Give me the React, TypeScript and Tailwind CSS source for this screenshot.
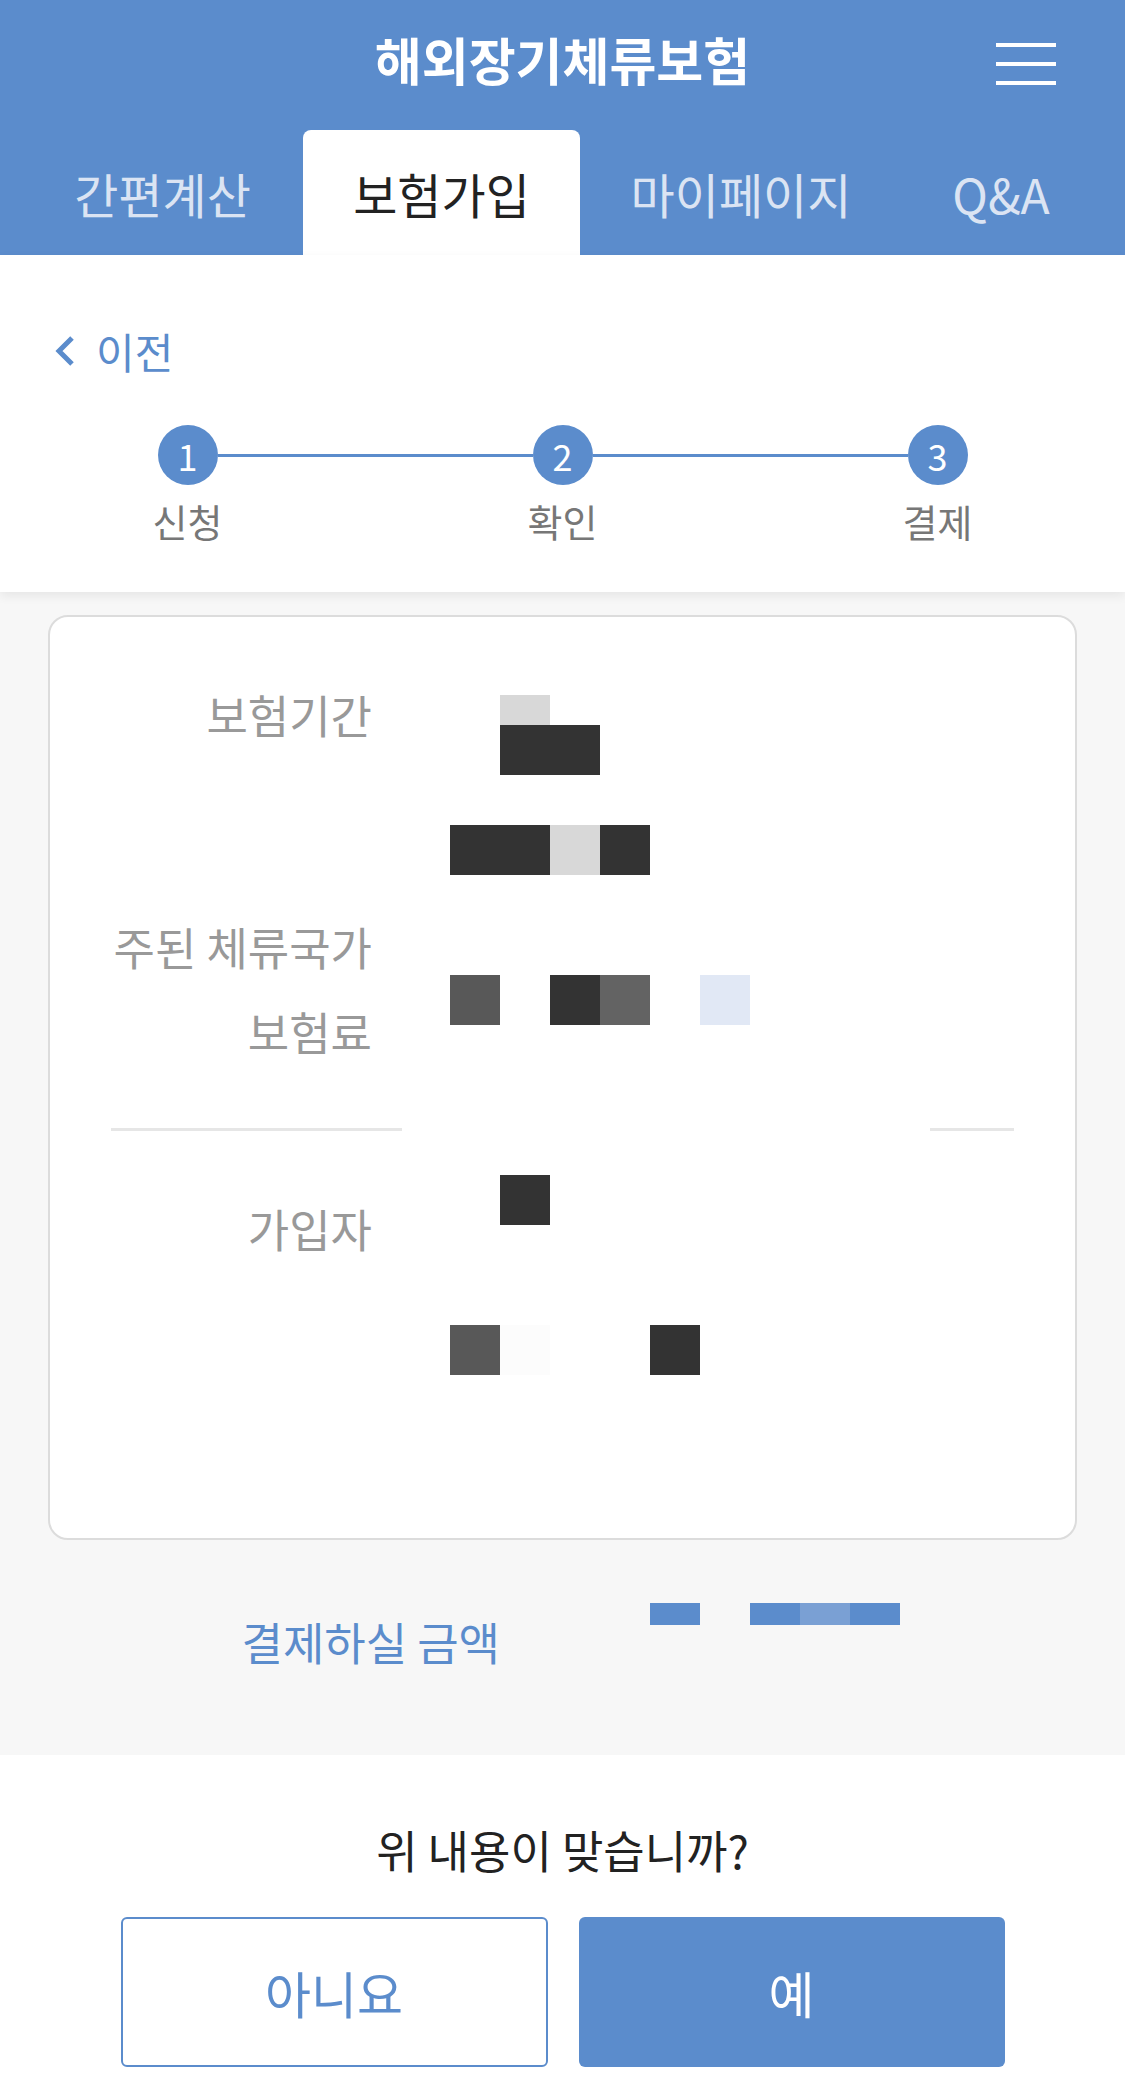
import React from 'react';

const Block = ({ w = 50, h = 50, c }: { w?: number; h?: number; c: string }) => (
    <div className={c} style={{ width: w, height: h }} />
);

const Step = ({ n, label, left, right }: { n: number; label: string; left: boolean; right: boolean }) => (
    <div className="flex w-[375px] flex-col items-center">
        <div className="flex w-full items-center">
            <div className={`h-[3px] flex-1 ${left ? 'bg-[#5b8ccc]' : ''}`} />
            <div className="flex h-[60px] w-[60px] items-center justify-center rounded-full bg-[#5b8ccc] text-[36px] leading-none text-white">
                {n}
            </div>
            <div className={`h-[3px] flex-1 ${right ? 'bg-[#5b8ccc]' : ''}`} />
        </div>
        <div className="mt-[19px] h-[34px] text-[38px] leading-[34px] text-[#777]">{label}</div>
    </div>
);

const App = () => {
    return (
        <div className="w-[1125px] font-['Noto_Sans_CJK_KR','Noto_Sans',sans-serif]">
            {/* header */}
            <div className="bg-[#5b8ccc]">
                <div className="relative flex h-[130px] items-start justify-center pt-[36px]">
                    <h1 className="text-[51px] font-bold leading-[46px] text-white">해외장기체류보험</h1>
                    <button className="absolute right-[69px] top-[43px] flex w-[60px] flex-col gap-[15px]">
                        <span className="block h-[4px] w-full bg-white" />
                        <span className="block h-[4px] w-full bg-white" />
                        <span className="block h-[4px] w-full bg-white" />
                    </button>
                </div>
                <div className="flex h-[125px] pl-[22px] text-[48px] leading-none">
                    <div className="flex w-[281px] items-center justify-center text-[#dbe4f3]">간편계산</div>
                    <div className="flex w-[277px] items-center justify-center rounded-t-[8px] bg-white text-[#222]">보험가입</div>
                    <div className="flex w-[322px] items-center justify-center text-[#dbe4f3]">마이페이지</div>
                    <div className="flex w-[198px] items-center justify-center text-[#dbe4f3]">Q&amp;A</div>
                </div>
            </div>

            {/* back + stepper */}
            <div className="relative z-10 bg-white pb-[54px] pt-[76px] shadow-[0_4px_10px_rgba(0,0,0,0.07)]">
                <div className="flex h-[40px] items-center pl-[54px] text-[42px] leading-[40px] text-[#5b8ccc]">
                    <svg width="22" height="32" viewBox="0 0 22 32" fill="none">
                        <path d="M18 3 L5 16 L18 29" stroke="#5b8ccc" strokeWidth="5" />
                    </svg>
                    <span className="ml-[20px]">이전</span>
                </div>
                <div className="mt-[54px] flex">
                    <Step n={1} label="신청" left={false} right />
                    <Step n={2} label="확인" left right />
                    <Step n={3} label="결제" left right={false} />
                </div>
            </div>

            {/* summary */}
            <div className="bg-[#f7f7f7] pb-[93px] pt-[23px]">
                <div className="mx-[48px] rounded-[20px] border-2 border-[#dcdcdc] bg-white pb-[163px] pt-[78px] text-[45px] leading-[40px] text-[#999]">
                    <div className="flex h-[80px]">
                        <div className="w-[322px] text-right">보험기간</div>
                        <div className="ml-[128px] flex flex-col">
                            <Block w={50} h={30} c="bg-[#d8d8d8]" />
                            <Block w={100} c="bg-[#333]" />
                        </div>
                    </div>
                    <div className="mt-[50px] flex h-[50px]">
                        <div className="w-[322px]" />
                        <div className="ml-[78px] flex">
                            <Block w={100} c="bg-[#333]" />
                            <Block c="bg-[#d8d8d8]" />
                            <Block c="bg-[#333]" />
                        </div>
                    </div>
                    <div className="mt-[52px] flex h-[40px]">
                        <div className="w-[322px] text-right">주된 체류국가</div>
                    </div>
                    <div className="mt-[8px] flex h-[77px]">
                        <div className="mt-[37px] w-[322px] text-right">보험료</div>
                        <div className="ml-[78px] flex h-[50px]">
                            <Block c="bg-[#585858]" />
                            <Block c="bg-white" />
                            <Block c="bg-[#333]" />
                            <Block c="bg-[#636363]" />
                            <Block c="bg-white" />
                            <Block c="bg-[#e1e8f5]" />
                        </div>
                    </div>
                    <div className="mt-[76px] flex h-[3px]">
                        <div className="ml-[61px] w-[291px] bg-[#e6e6e6]" />
                        <div className="ml-[528px] w-[84px] bg-[#e6e6e6]" />
                    </div>
                    <div className="mt-[44px] flex h-[74px]">
                        <div className="mt-[34px] w-[322px] text-right">가입자</div>
                        <div className="ml-[128px]">
                            <Block c="bg-[#333]" />
                        </div>
                    </div>
                    <div className="mt-[76px] flex h-[50px]">
                        <div className="w-[322px]" />
                        <div className="ml-[78px] flex">
                            <Block c="bg-[#585858]" />
                            <Block c="bg-[#fcfcfc]" />
                            <Block w={100} c="bg-white" />
                            <Block c="bg-[#333]" />
                        </div>
                    </div>
                </div>

                <div className="mt-[63px] flex h-[59px] text-[45px] leading-[40px] text-[#5b8ccc]">
                    <div className="mt-[19px] w-[500px] text-right">결제하실 금액</div>
                    <div className="ml-[150px] flex h-[22px]">
                        <Block h={22} c="bg-[#5b8ccc]" />
                        <Block h={22} c="bg-transparent" />
                        <Block h={22} c="bg-[#5b8ccc]" />
                        <Block h={22} c="bg-[#7aa0d4]" />
                        <Block h={22} c="bg-[#5b8ccc]" />
                    </div>
                </div>
            </div>

            {/* confirm */}
            <div className="bg-white pb-[8px] pt-[75px]">
                <p className="text-center text-[45px] leading-[40px] text-[#222]">위 내용이 맞습니까?</p>
                <div className="mt-[47px] flex justify-center gap-[31px]">
                    <button className="h-[150px] w-[427px] rounded-[6px] border-2 border-[#5b8ccc] bg-white text-[50px] text-[#5b8ccc]">
                        아니요
                    </button>
                    <button className="h-[150px] w-[426px] rounded-[6px] bg-[#5b8ccc] text-[50px] text-white">
                        예
                    </button>
                </div>
            </div>
        </div>
    );
};

export default App;
